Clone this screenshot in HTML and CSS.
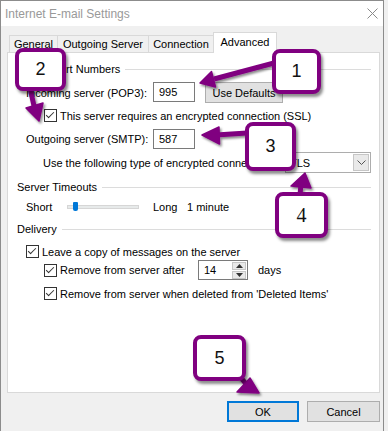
FILE: index.html
```html
<!DOCTYPE html>
<html>
<head>
<title>Internet E-mail Settings</title>
<link rel="stylesheet" href="styles.css">
</head>
<body>
<div class="window">
  <div class="titlebar">
    <span class="title">Internet E-mail Settings</span>
    <svg class="close" width="11" height="11" viewBox="0 0 11 11"><path d="M0.5 0.5L10.5 10.5M10.5 0.5L0.5 10.5" stroke="#8a8a8a" stroke-width="1"/></svg>
  </div>

  <div class="dialog">
    <div class="tabs">
      <div class="tab tab-general">General</div>
      <div class="tab tab-outgoing">Outgoing Server</div>
      <div class="tab tab-connection">Connection</div>
      <div class="tab tab-advanced active">Advanced</div>
    </div>

    <div class="panel">
      <div class="group-head">Server Port Numbers</div>
      <div class="row row-incoming">
        <span class="field-label">Incoming server (POP3):</span>
        <input class="text-box" type="text" value="995">
        <button class="btn btn-defaults">Use Defaults</button>
      </div>
      <div class="row row-check sub">
        <span class="check"></span>
        <span>This server requires an encrypted connection (SSL)</span>
      </div>
      <div class="row row-outgoing">
        <span class="field-label">Outgoing server (SMTP):</span>
        <input class="text-box" type="text" value="587">
      </div>
      <div class="row row-encrypt">
        <span>Use the following type of encrypted connection:</span>
        <div class="combo">
          <span class="combo-text">TLS</span>
          <span class="combo-arrow">
            <svg width="9" height="5" viewBox="0 0 9 5"><path d="M0.5 0.5L4.5 4.5L8.5 0.5" fill="none" stroke="#555" stroke-width="1"/></svg>
          </span>
        </div>
      </div>

      <div class="group-head head-timeouts">Server Timeouts</div>
      <div class="row row-slider">
        <span class="slider-short">Short</span>
        <div class="track"><span class="thumb"></span></div>
        <span class="slider-long">Long</span>
        <span>1 minute</span>
      </div>

      <div class="group-head head-delivery">Delivery</div>
      <div class="row row-leave">
        <span class="check"></span>
        <span>Leave a copy of messages on the server</span>
      </div>
      <div class="row row-remove sub">
        <span class="check"></span>
        <span class="remove-label">Remove from server after</span>
        <div class="spinner">
          <span class="spinner-text">14</span>
          <span class="spin-btns">
            <span class="spin-btn"><svg width="7" height="4" viewBox="0 0 7 4"><path d="M3.5 0L7 4H0Z" fill="#333"/></svg></span>
            <span class="spin-btn"><svg width="7" height="4" viewBox="0 0 7 4"><path d="M0 0H7L3.5 4Z" fill="#333"/></svg></span>
          </span>
        </div>
        <span class="days">days</span>
      </div>
      <div class="row row-deleted sub">
        <span class="check"></span>
        <span>Remove from server when deleted from 'Deleted Items'</span>
      </div>
    </div>

    <div class="buttons">
      <button class="btn btn-ok">OK</button>
      <button class="btn btn-cancel">Cancel</button>
    </div>
  </div>

  <!-- annotation callouts -->
  <svg class="arrows" width="388" height="431" viewBox="0 0 388 431">
    <defs>
      <filter id="shade" x="-20%" y="-20%" width="150%" height="150%">
        <feDropShadow dx="1.5" dy="2" stdDeviation="1.2" flood-color="#000" flood-opacity="0.45"/>
      </filter>
    </defs>
    <g fill="#800080" stroke="#800080" stroke-linejoin="round" filter="url(#shade)">
      <path d="M274 63L214 79" stroke-width="5" fill="none"/>
      <path d="M200 83L211.5 71.5L215.5 87Z" stroke-width="1.5"/>

      <path d="M30 88L34 106" stroke-width="5" fill="none"/>
      <path d="M39 121L26 108L43 103Z" stroke-width="1.5"/>

      <path d="M247 133L216 135" stroke-width="5" fill="none"/>
      <path d="M202 135L219 127L219.5 144Z" stroke-width="1.5"/>

      <path d="M300 195L301 184" stroke-width="5" fill="none"/>
      <path d="M305 173L291 186L311 188Z" stroke-width="1.5"/>

      <path d="M236 372L247 385" stroke-width="5" fill="none"/>
      <path d="M259 393L237 392L250 378Z" stroke-width="1.5"/>
    </g>
  </svg>
  <div class="callout callout-1">1</div>
  <div class="callout callout-2">2</div>
  <div class="callout callout-3">3</div>
  <div class="callout callout-4">4</div>
  <div class="callout callout-5">5</div>
</div>
</body>
</html>
```

FILE: styles.css
```css
body {
    margin: 0;
    background: #f0f0f0;
    font-family: "Liberation Sans", Arial, sans-serif;
    font-size: 11px;
    color: #000;
}

.window {
    position: relative;
    width: 384px;
    height: 431px;
    box-sizing: border-box;
    border: 1px solid #8c8c8c;
    border-bottom: none;
    background: #f0f0f0;
    overflow: hidden;
}

.titlebar {
    height: 25px;
    background: #fff;
    display: flex;
    align-items: center;
    justify-content: space-between;
    padding: 0 5px 0 4px;
}

.title {
    font-size: 12px;
    color: #999;
}

.dialog {
    padding: 7px 3px 0 6px;
}

/* tabs */
.tabs {
    display: flex;
    align-items: flex-end;
    height: 20px;
    padding-left: 2px;
}

.tab {
    height: 18px;
    box-sizing: border-box;
    border: 1px solid #d9d9d9;
    border-bottom: none;
    border-right: none;
    background: #f0f0f0;
    line-height: 17px;
    text-align: center;
}

.tab-general { width: 48px; }
.tab-outgoing { width: 91px; }
.tab-connection { width: 65px; }

.tab.active {
    width: 64px;
    height: 21px;
    border-right: 1px solid #d9d9d9;
    background: #fff;
    position: relative;
    z-index: 2;
    line-height: 18px;
}

.panel {
    position: relative;
    z-index: 1;
    margin-top: -1px;
    height: 341px;
    box-sizing: border-box;
    border: 1px solid #d9d9d9;
    background: #fff;
    padding: 9px 8px 0 9px;
}

.group-head {
    display: flex;
    align-items: center;
    height: 14px;
}

.group-head::after {
    content: "";
    flex: 1;
    height: 1px;
    background: #dcdcdc;
    margin-left: 5px;
}

.head-timeouts { margin-top: 7px; }
.head-delivery { margin-top: 8px; }

.row {
    display: flex;
    align-items: center;
    margin-left: 9px;
    height: 15px;
}

.row.sub {
    margin-left: 27px;
}

.row-incoming {
    height: 21px;
    margin-top: 6px;
}

.row-check {
    margin-top: 5px;
}

.row-outgoing {
    height: 20px;
    margin-top: 6px;
}

.row-encrypt {
    height: 21px;
    margin-top: 3px;
    margin-left: 26px;
}

.field-label {
    width: 127px;
}

.text-box {
    width: 42px;
    height: 20px;
    box-sizing: border-box;
    border: 1px solid #7a7a7a;
    padding: 0 0 0 5px;
    margin: 0;
    font: inherit;
    color: #000;
    background: #fff;
    align-self: flex-start;
}

.btn {
    font: inherit;
    color: #000;
    background: #e1e1e1;
    border: 1px solid #adadad;
    height: 21px;
    padding: 0;
    margin: 0;
    box-sizing: border-box;
}

.btn-defaults {
    width: 78px;
    margin-left: 10px;
}

/* checkbox */
.check {
    position: relative;
    width: 13px;
    height: 13px;
    box-sizing: border-box;
    border: 1px solid #333;
    background: #fff;
    margin-right: 3px;
    flex: none;
}

.check::after {
    content: "";
    position: absolute;
    left: 3px;
    top: 0;
    width: 3px;
    height: 7px;
    border: solid #333;
    border-width: 0 1.5px 1.5px 0;
    transform: rotate(45deg);
}

/* combo box */
.combo {
    margin-left: auto;
    width: 86px;
    height: 21px;
    box-sizing: border-box;
    border: 1px solid #adadad;
    background: #fff;
    display: flex;
    align-items: center;
    justify-content: space-between;
    padding: 0 1px 0 4px;
}

.combo-arrow {
    width: 16px;
    height: 17px;
    box-sizing: border-box;
    border: 1px solid #c6c6c6;
    background: #e9e9e9;
    display: flex;
    align-items: center;
    justify-content: center;
}

/* slider */
.row-slider {
    margin-top: 6px;
    height: 14px;
}

.slider-short {
    width: 41px;
}

.track {
    position: relative;
    width: 72px;
    height: 4px;
    box-sizing: border-box;
    border: 1px solid #d6d6d6;
    background: #e7eaea;
    margin-right: 14px;
}

.thumb {
    position: absolute;
    left: 5px;
    top: -4px;
    width: 5px;
    height: 9px;
    background: #0078d7;
    border-radius: 1px 1px 2px 2px;
}

.slider-long {
    width: 34px;
}

/* delivery */
.row-leave {
    margin-top: 8px;
}

.row-remove {
    height: 20px;
    margin-top: 1px;
}

.remove-label {
    width: 138px;
}

.spinner {
    width: 50px;
    height: 20px;
    box-sizing: border-box;
    border: 1px solid #7a7a7a;
    background: #fff;
    display: flex;
    align-items: center;
    justify-content: space-between;
    padding: 0 1px 0 5px;
}

.spin-btns {
    display: flex;
    flex-direction: column;
    gap: 1px;
}

.spin-btn {
    width: 14px;
    height: 8px;
    box-sizing: border-box;
    border: 1px solid #c6c6c6;
    background: #e9e9e9;
    display: flex;
    align-items: center;
    justify-content: center;
}

.days {
    margin-left: 10px;
}

.row-deleted {
    margin-top: 6px;
}

/* bottom buttons */
.buttons {
    display: flex;
    justify-content: flex-end;
    gap: 8px;
    margin-top: 8px;
}

.btn-ok {
    width: 72px;
    border: 2px solid #0078d7;
}

.btn-cancel {
    width: 73px;
}

/* callouts */
.arrows {
    position: absolute;
    left: -1px;
    top: -1px;
    z-index: 5;
}

.callout {
    position: absolute;
    z-index: 6;
    box-sizing: border-box;
    border: 4px solid #800080;
    border-radius: 8px;
    background: #fff;
    box-shadow: 2px 3px 3px rgba(0, 0, 0, 0.45);
    display: flex;
    align-items: center;
    justify-content: center;
    font-size: 18px;
    color: #111;
}

.callout-1 { left: 271px; top: 48px; width: 49px; height: 45px; }
.callout-2 { left: 14px; top: 47px; width: 51px; height: 43px; }
.callout-3 { left: 244px; top: 121px; width: 51px; height: 49px; }
.callout-4 { left: 274px; top: 191px; width: 53px; height: 46px; font-family: "Liberation Serif", serif; font-size: 20px; }
.callout-5 { left: 192px; top: 334px; width: 53px; height: 46px; }
```
